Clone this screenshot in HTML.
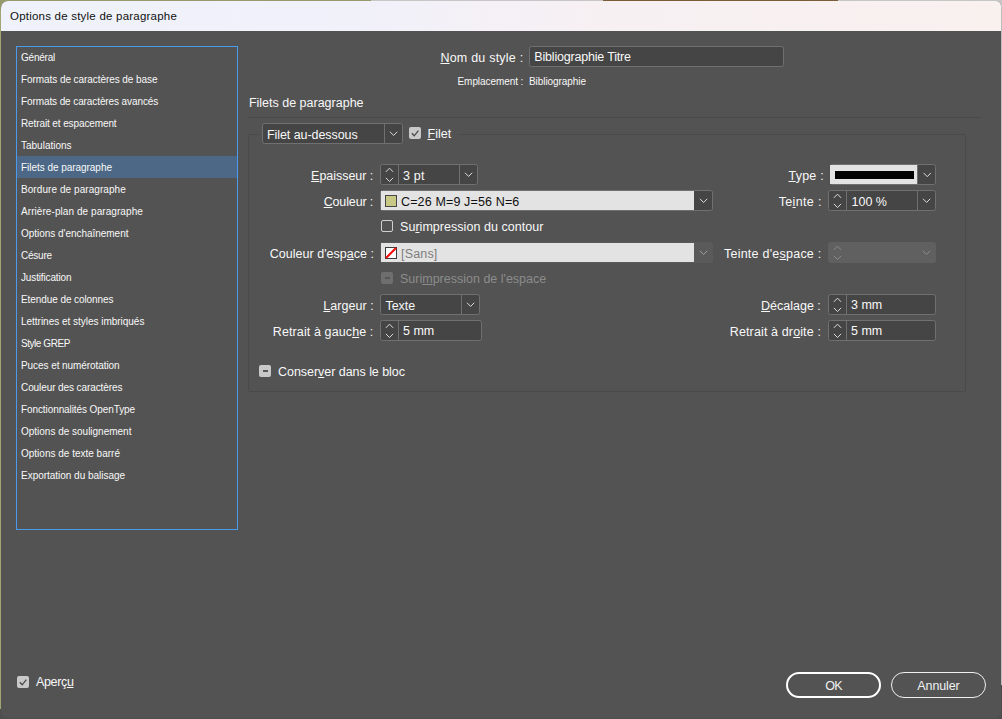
<!DOCTYPE html>
<html>
<head>
<meta charset="utf-8">
<title>Options de style de paragraphe</title>
<style>
*{box-sizing:border-box;margin:0;padding:0}
html,body{width:1002px;height:719px;overflow:hidden;background:#4e4e4e;font-family:"Liberation Sans",sans-serif}
#bgl{position:absolute;left:0;top:0;width:12px;height:709px;background:#a2a573}
#bgt{position:absolute;left:0;top:0;width:1002px;height:10px;background:linear-gradient(90deg,#97996a 0,#97996a 371px,#c6c6c6 371px,#c6c6c6 603px,#7a5c36 603px,#7a5c36 838px,#c6c6c6 838px,#c6c6c6 1002px)}
#bgr{position:absolute;left:990px;top:8px;width:12px;height:677px;background:#bdbdbd}
#win{position:absolute;left:1px;top:1px;width:1000px;height:717px;background:#535353;border-radius:7px 5px 7px 7px;overflow:hidden}
#tbar{position:absolute;left:0;top:0;width:1000px;height:30px;background:linear-gradient(90deg,#eff2fa 0%,#f1f1fa 35%,#f7f0f3 60%,#f9f1ee 100%)}
.t{position:absolute;white-space:nowrap;color:#f8f8f8;font-size:12.5px;line-height:16px;height:16px}
.r{text-align:right}
.dis{color:#8c8c8c}
u{text-decoration:underline;text-underline-offset:0.8px;text-decoration-thickness:1px}
#list{position:absolute;left:16px;top:46px;width:222px;height:484px;border:1px solid #4a9aed}
.li{position:absolute;left:0;width:220px;height:22px}
.li span{position:absolute;left:4px;top:4px;font-size:10px;line-height:16px;color:#f8f8f8;white-space:nowrap}
.sel{background:#4c6886}
.box{position:absolute;background:#454545;border:1px solid #707070;border-radius:2.5px}
.dv{position:absolute;top:0;bottom:0;width:1px;background:#707070}
.hl{position:absolute;height:1px;background:#5e5e5e}
.vl{position:absolute;width:1px;background:#5e5e5e}
svg{position:absolute;overflow:visible}
.cb{position:absolute;width:12px;height:12px;border-radius:2px}
.btn{position:absolute;height:26px;border-radius:13px;border:1px solid #f0f0f0;color:#f0f0f0;font-size:12.5px;line-height:16px;text-align:center}
</style>
</head>
<body>
<div id="bgl"></div><div id="bgt"></div><div id="bgr"></div><div id="win"><div id="tbar"></div></div>
<div class="t" id="title" style="top:7.6px;left:10px;letter-spacing:0.22px;color:#111;font-size:11.5px;">Options de style de paragraphe</div>
<div id="list">
<div class="li" style="top:-1px"><span style="letter-spacing:-0.22px">Général</span></div>
<div class="li" style="top:21px"><span style="letter-spacing:-0.07px">Formats de caractères de base</span></div>
<div class="li" style="top:43px"><span style="letter-spacing:-0.1px">Formats de caractères avancés</span></div>
<div class="li" style="top:65px"><span style="letter-spacing:-0.11px">Retrait et espacement</span></div>
<div class="li" style="top:87px"><span style="letter-spacing:0px">Tabulations</span></div>
<div class="li sel" style="top:109px"><span style="letter-spacing:-0.04px">Filets de paragraphe</span></div>
<div class="li" style="top:131px"><span style="letter-spacing:0.07px">Bordure de paragraphe</span></div>
<div class="li" style="top:153px"><span style="letter-spacing:0.07px">Arrière-plan de paragraphe</span></div>
<div class="li" style="top:175px"><span style="letter-spacing:-0.03px">Options d'enchaînement</span></div>
<div class="li" style="top:197px"><span style="letter-spacing:-0.22px">Césure</span></div>
<div class="li" style="top:219px"><span style="letter-spacing:-0.14px">Justification</span></div>
<div class="li" style="top:241px"><span style="letter-spacing:-0.08px">Etendue de colonnes</span></div>
<div class="li" style="top:263px"><span style="letter-spacing:-0.02px">Lettrines et styles imbriqués</span></div>
<div class="li" style="top:285px"><span style="letter-spacing:-0.45px">Style GREP</span></div>
<div class="li" style="top:307px"><span style="letter-spacing:-0.07px">Puces et numérotation</span></div>
<div class="li" style="top:329px"><span style="letter-spacing:-0.09px">Couleur des caractères</span></div>
<div class="li" style="top:351px"><span style="letter-spacing:-0.09px">Fonctionnalités OpenType</span></div>
<div class="li" style="top:373px"><span style="letter-spacing:-0.01px">Options de soulignement</span></div>
<div class="li" style="top:395px"><span style="letter-spacing:0px">Options de texte barré</span></div>
<div class="li" style="top:417px"><span style="letter-spacing:-0.02px">Exportation du balisage</span></div>
</div>
<div class="t r" id="nom" style="top:49.9px;right:478.6px;letter-spacing:0.22px;"><u>N</u>om du style :</div>
<div class="box" id="nombox" style="left:529px;top:46px;width:255px;height:21px"></div>
<div class="t" id="nomval" style="top:48.5px;left:534.3px;letter-spacing:-0.19px;">Bibliographie Titre</div>
<div class="t r" id="emp" style="top:74px;right:478.70000000000005px;letter-spacing:-0.07px;font-size:10px;">Emplacement :</div>
<div class="t" id="empval" style="top:74px;left:529px;letter-spacing:-0.06px;font-size:10px;">Bibliographie</div>
<div class="t" id="head" style="top:95.1px;left:248.9px;">Filets de paragraphe</div>
<div class="hl" style="left:248px;top:117px;width:733px;background:#4a4a4a"></div>
<div style="position:absolute;left:248px;top:134px;width:718px;height:258px;border:1px solid #4a4a4a;border-radius:2px"></div>
<div style="position:absolute;left:259px;top:134px;width:199.5px;height:1px;background:#535353"></div>
<div class="box" style="left:262px;top:123px;width:141px;height:21px"><div class="dv" style="right:17px"></div></div><svg style="left:0;top:0" width="1" height="1"><polyline points="390.0,131.75 393.6,135.45 397.20000000000005,131.75" fill="none" stroke="#dcdcdc" stroke-width="1"/></svg>
<div class="t" id="fad" style="top:127px;left:267px;letter-spacing:-0.07px;">Filet au-dessous</div>
<div class="cb" style="left:409px;top:127px;background:#c9c9c9"></div>
<svg style="left:0;top:0" width="1" height="1"><polyline points="411.8,133.2 414.2,135.8 418.4,130.6" fill="none" stroke="#4a4a4a" stroke-width="1.3"/></svg>
<div class="t" id="filet" style="top:126px;left:427.5px;"><u>F</u>ilet</div>
<div class="t r" id="epa" style="top:168px;right:628.8px;letter-spacing:-0.04px;"><u>E</u>paisseur :</div>
<div class="box" style="left:380px;top:164px;width:98px;height:21px"><div class="dv" style="left:17px"></div><div class="dv" style="right:17px"></div></div>
<svg style="left:0;top:0" width="1" height="1"><polyline points="385.9,171.85 389.5,168.15 393.1,171.85" fill="none" stroke="#dcdcdc" stroke-width="1"/></svg>
<svg style="left:0;top:0" width="1" height="1"><polyline points="385.9,177.85 389.5,181.54999999999998 393.1,177.85" fill="none" stroke="#dcdcdc" stroke-width="1"/></svg>
<svg style="left:0;top:0" width="1" height="1"><polyline points="465.0,172.75 468.6,176.45 472.20000000000005,172.75" fill="none" stroke="#dcdcdc" stroke-width="1"/></svg>
<div class="t" id="epav" style="top:168px;left:403px;letter-spacing:0.2px;">3 pt</div>
<div class="t r" id="cou" style="top:193.5px;right:628.8px;letter-spacing:-0.13px;"><u>C</u>ouleur :</div>
<div class="box" style="left:380px;top:190px;width:333px;height:21px"><div style="position:absolute;left:0;top:0;bottom:0;width:313px;background:#e3e3e3"></div></div>
<svg style="left:0;top:0" width="1" height="1"><polyline points="700.0,198.85 703.6,202.54999999999998 707.2,198.85" fill="none" stroke="#dcdcdc" stroke-width="1"/></svg>
<div style="position:absolute;left:385px;top:195px;width:12px;height:12px;background:#c7c985;border:1px solid #464646"></div>
<div class="t" id="couv" style="top:193.5px;left:401px;letter-spacing:0.14px;color:#111;">C=26 M=9 J=56 N=6</div>
<div class="cb" style="left:381px;top:220px;border:1px solid #d0d0d0"></div>
<div class="t" id="sur1" style="top:218.5px;left:400px;letter-spacing:0.04px;">Su<u>r</u>impression du contour</div>
<div class="t r" id="cesp" style="top:245.5px;right:628px;letter-spacing:0.02px;">Couleur d'esp<u>a</u>ce :</div>
<div class="box" style="left:380px;top:242px;width:333px;height:21px;border-color:#5a5a5a;background:#5a5a5a"><div style="position:absolute;left:0;top:0;bottom:0;width:313px;background:#e3e3e3"></div></div>
<svg style="left:0;top:0" width="1" height="1"><polyline points="700.0,250.85 703.6,254.54999999999998 707.2,250.85" fill="none" stroke="#a0a0a0" stroke-width="1"/></svg>
<div style="position:absolute;left:385px;top:247px;width:12px;height:12px;background:#fff;border:1px solid #3c3c3c"></div>
<svg style="left:0;top:0" width="1" height="1"><line x1="386" y1="258" x2="396" y2="248" stroke="#f20d0d" stroke-width="2.1"/></svg>
<div class="t" id="sans" style="top:245.5px;left:401px;letter-spacing:0.17px;color:#7d7d7d;">[Sans]</div>
<div class="cb" style="left:381px;top:272px;background:#6e6e6e"></div>
<div style="position:absolute;left:384.5px;top:277.3px;width:5px;height:2px;background:#555"></div>
<div class="t dis" id="sur2" style="top:271px;left:400px;">Suri<u>m</u>pression de l'espace</div>
<div class="t r" id="lar" style="top:297.5px;right:628.1px;letter-spacing:0.06px;"><u>L</u>argeur :</div>
<div class="box" style="left:380px;top:294px;width:100px;height:21px"><div class="dv" style="right:17px"></div></div><svg style="left:0;top:0" width="1" height="1"><polyline points="467.0,302.75 470.6,306.45000000000005 474.20000000000005,302.75" fill="none" stroke="#dcdcdc" stroke-width="1"/></svg>
<div class="t" id="larv" style="top:297.5px;left:385.5px;letter-spacing:-0.05px;">Texte</div>
<div class="t r" id="rg" style="top:323.5px;right:628.6px;letter-spacing:0.105px;">Retrait à gauc<u>h</u>e :</div>
<div class="box" style="left:380px;top:320px;width:102px;height:21px"><div class="dv" style="left:17px"></div></div>
<svg style="left:0;top:0" width="1" height="1"><polyline points="385.9,327.85 389.5,324.15 393.1,327.85" fill="none" stroke="#dcdcdc" stroke-width="1"/></svg>
<svg style="left:0;top:0" width="1" height="1"><polyline points="385.9,333.84999999999997 389.5,337.55 393.1,333.84999999999997" fill="none" stroke="#dcdcdc" stroke-width="1"/></svg>
<div class="t" id="rgv" style="top:322.6px;left:403px;">5 mm</div>
<div class="cb" style="left:259px;top:365px;background:#c9c9c9"></div>
<div style="position:absolute;left:262.6px;top:370.2px;width:5.2px;height:2px;background:#585858"></div>
<div class="t" id="cons" style="top:363.5px;left:278px;letter-spacing:-0.04px;">Conser<u>v</u>er dans le bloc</div>
<div class="t r" id="typ" style="top:168px;right:178px;letter-spacing:0.24px;"><u>T</u>ype :</div>
<div class="box" style="left:830px;top:164px;width:106px;height:21px"><div style="position:absolute;left:-1px;top:0;bottom:0;width:87px;background:#e3e3e3"></div><div class="dv" style="right:17px"></div></div>
<div style="position:absolute;left:835px;top:171px;width:79px;height:8px;background:#000"></div>
<svg style="left:0;top:0" width="1" height="1"><polyline points="923.65,172.95000000000002 927.25,176.65 930.85,172.95000000000002" fill="none" stroke="#dcdcdc" stroke-width="1"/></svg>
<div class="t r" id="tei" style="top:193.5px;right:180.20000000000005px;letter-spacing:0.36px;">Te<u>i</u>nte :</div>
<div class="box" style="left:828px;top:190px;width:108px;height:21px"><div class="dv" style="left:17px"></div><div class="dv" style="right:17px"></div></div>
<svg style="left:0;top:0" width="1" height="1"><polyline points="833.9,197.85 837.5,194.15 841.1,197.85" fill="none" stroke="#dcdcdc" stroke-width="1"/></svg>
<svg style="left:0;top:0" width="1" height="1"><polyline points="833.9,203.85 837.5,207.54999999999998 841.1,203.85" fill="none" stroke="#dcdcdc" stroke-width="1"/></svg>
<svg style="left:0;top:0" width="1" height="1"><polyline points="923.0,198.75 926.6,202.45 930.2,198.75" fill="none" stroke="#dcdcdc" stroke-width="1"/></svg>
<div class="t" id="teiv" style="top:193.5px;left:851.5px;">100 %</div>
<div class="t r" id="tesp" style="top:245.5px;right:180.5px;letter-spacing:0.24px;">Teinte d'e<u>s</u>pace :</div>
<div class="box" style="left:828px;top:242px;width:108px;height:21px;background:#606060;border-color:#606060"></div>
<svg style="left:0;top:0" width="1" height="1"><polyline points="833.9,249.85 837.5,246.15 841.1,249.85" fill="none" stroke="#8c8c8c" stroke-width="1"/></svg>
<svg style="left:0;top:0" width="1" height="1"><polyline points="833.9,255.85 837.5,259.55 841.1,255.85" fill="none" stroke="#8c8c8c" stroke-width="1"/></svg>
<svg style="left:0;top:0" width="1" height="1"><polyline points="923.0,250.75 926.6,254.45 930.2,250.75" fill="none" stroke="#8c8c8c" stroke-width="1"/></svg>
<div class="t r" id="dec" style="top:297.5px;right:181.20000000000005px;"><u>D</u>écalage :</div>
<div class="box" style="left:828px;top:294px;width:108px;height:21px"><div class="dv" style="left:17px"></div></div>
<svg style="left:0;top:0" width="1" height="1"><polyline points="833.9,301.85 837.5,298.15 841.1,301.85" fill="none" stroke="#dcdcdc" stroke-width="1"/></svg>
<svg style="left:0;top:0" width="1" height="1"><polyline points="833.9,307.84999999999997 837.5,311.55 841.1,307.84999999999997" fill="none" stroke="#dcdcdc" stroke-width="1"/></svg>
<div class="t" id="decv" style="top:297px;left:851px;">3 mm</div>
<div class="t r" id="rd" style="top:323.5px;right:181px;letter-spacing:0.125px;">Retrait à dr<u>o</u>ite :</div>
<div class="box" style="left:828px;top:320px;width:108px;height:21px"><div class="dv" style="left:17px"></div></div>
<svg style="left:0;top:0" width="1" height="1"><polyline points="833.9,327.85 837.5,324.15 841.1,327.85" fill="none" stroke="#dcdcdc" stroke-width="1"/></svg>
<svg style="left:0;top:0" width="1" height="1"><polyline points="833.9,333.84999999999997 837.5,337.55 841.1,333.84999999999997" fill="none" stroke="#dcdcdc" stroke-width="1"/></svg>
<div class="t" id="rdv" style="top:322.5px;left:851px;">5 mm</div>
<div class="cb" style="left:17px;top:676px;background:#c9c9c9"></div>
<svg style="left:0;top:0" width="1" height="1"><polyline points="19.8,682.2 22.2,684.8 26.4,679.6" fill="none" stroke="#4a4a4a" stroke-width="1.3"/></svg>
<div class="t" id="ape" style="top:674.3px;left:36px;letter-spacing:-0.35px;">Aperç<u>u</u></div>
<div class="btn" id="ok" style="left:786px;top:672px;width:95px;border-width:2px;border-color:#fff;padding-top:3.5px;letter-spacing:-0.8px">OK</div>
<div class="btn" id="ann" style="left:891px;top:672px;width:95px;padding-top:4.5px;letter-spacing:-0.11px">Annuler</div>
</body>
</html>
